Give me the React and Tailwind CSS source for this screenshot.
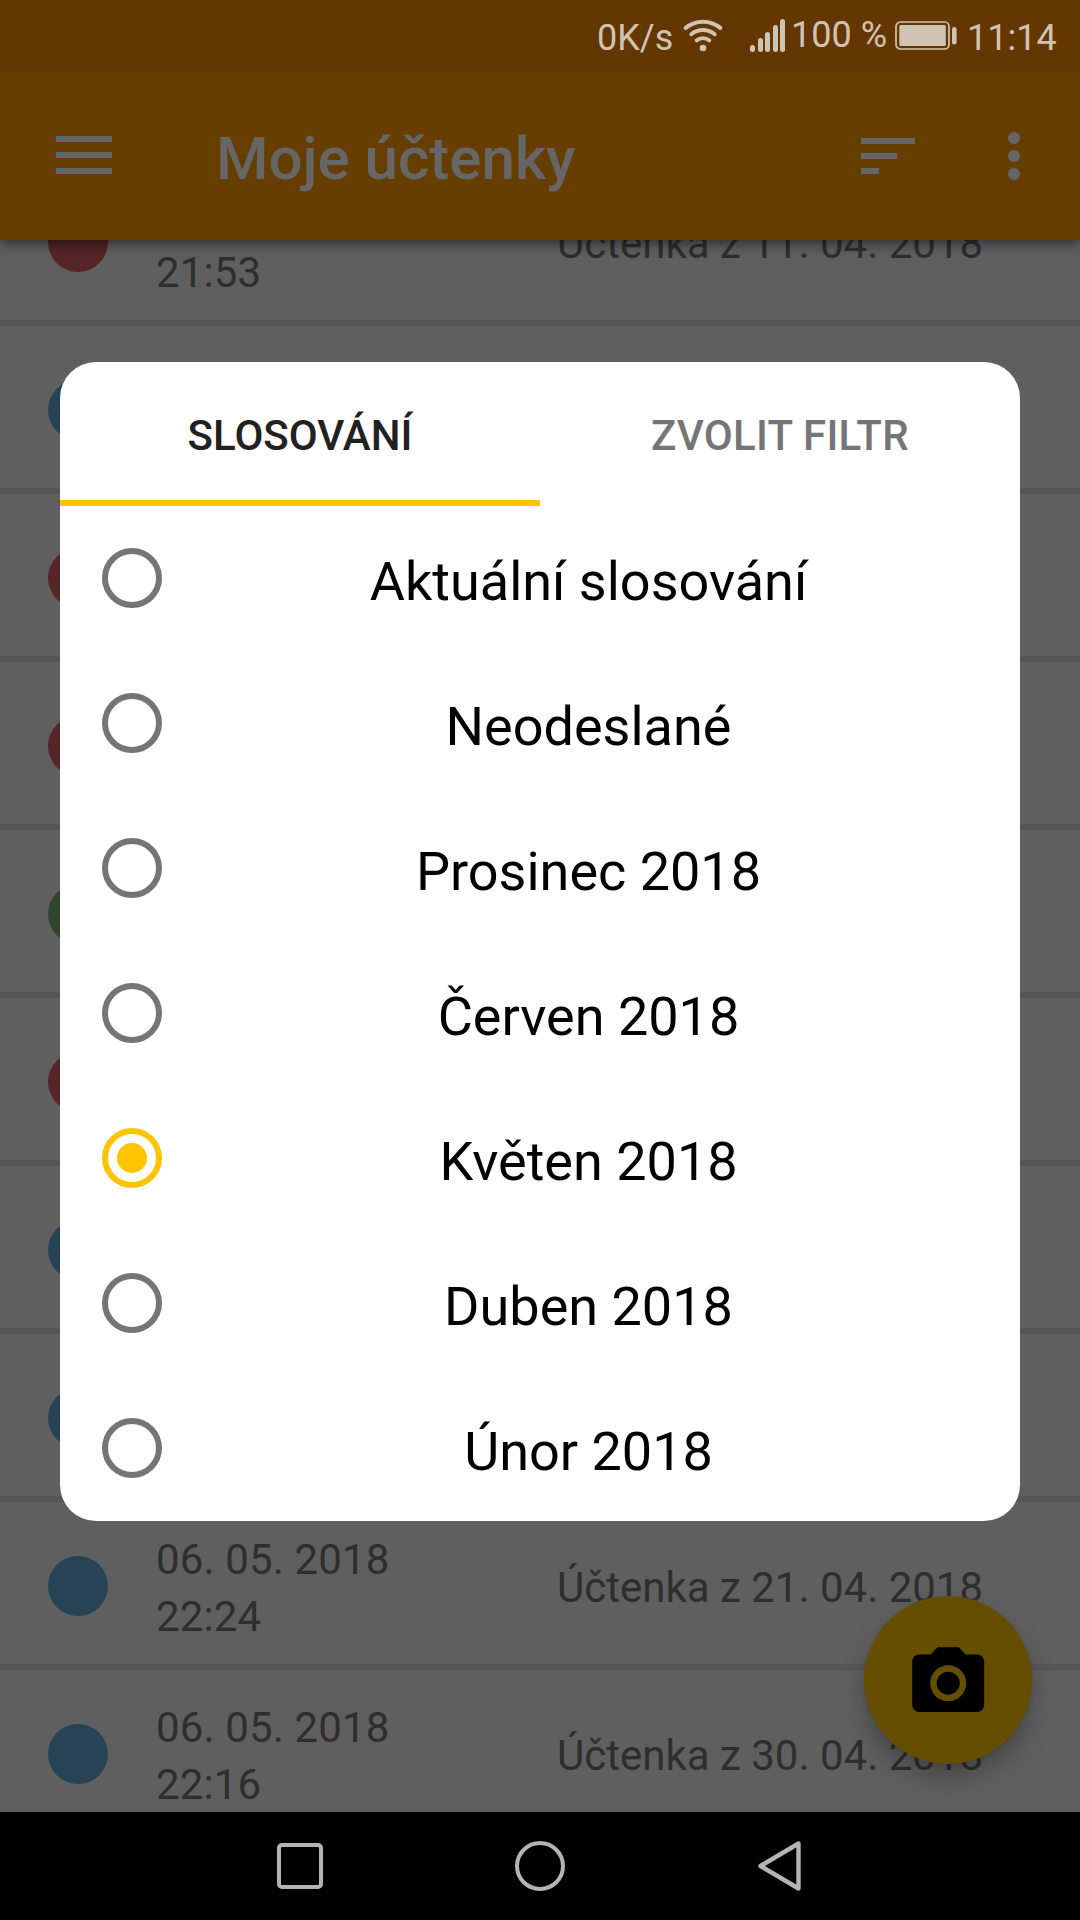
const ROWS = [
  { color: "bg-[#562527]", time: "21:53", title: "Účtenka z 11. 04. 2018" },
  { color: "bg-[#264455]" },
  { color: "bg-[#562527]" },
  { color: "bg-[#562527]" },
  { color: "bg-[#304630]" },
  { color: "bg-[#562527]" },
  { color: "bg-[#264455]" },
  { color: "bg-[#264455]" },
  { color: "bg-[#264455]", date: "06. 05. 2018", time: "22:24", title: "Účtenka z 21. 04. 2018" },
  { color: "bg-[#264455]", date: "06. 05. 2018", time: "22:16", title: "Účtenka z 30. 04. 2018" },
];

const OPTIONS = [
  "Aktuální slosování",
  "Neodeslané",
  "Prosinec 2018",
  "Červen 2018",
  "Květen 2018",
  "Duben 2018",
  "Únor 2018",
];

function StatusBar() {
  return (
    <div className="relative z-20 flex h-[72px] shrink-0 items-start bg-[#643600] pl-[597px] text-[36px] leading-[42px] text-[#d1c3b2]">
      <span className="mt-[17px] w-[86px] whitespace-nowrap">0K/s</span>
      <svg className="mt-[18px] h-9 w-10 shrink-0" viewBox="0 0 40 36" fill="none" stroke="#d1c3b2" strokeWidth="4" strokeLinecap="round">
        <path d="M2.7 9.9A27 27 0 0 1 37.3 9.9" />
        <path d="M8.3 16.2A18.5 18.5 0 0 1 31.7 16.2" />
        <path d="M13.7 22.3A10.4 10.4 0 0 1 26.3 22.3" />
        <circle cx="20" cy="30" r="3.3" fill="#d1c3b2" stroke="none" />
      </svg>
      <div className="mt-[19px] ml-[27px] flex h-[33px] w-[35px] shrink-0 items-end justify-between">
        <i className="h-[7px] w-[5px] rounded-full bg-[#d1c3b2]" />
        <i className="h-[14px] w-[5px] rounded-full bg-[#d1c3b2]" />
        <i className="h-[20px] w-[5px] rounded-full bg-[#d1c3b2]" />
        <i className="h-[27px] w-[5px] rounded-full bg-[#d1c3b2]" />
        <i className="h-[33px] w-[5px] rounded-full bg-[#d1c3b2]" />
      </div>
      <span className="mt-[14px] ml-[6px] w-[104px] whitespace-nowrap">100 %</span>
      <svg className="mt-5 h-8 w-[62px] shrink-0" viewBox="0 0 62 32">
        <rect x="1" y="2" width="53" height="27" rx="4.5" fill="none" stroke="#d1c3b2" strokeWidth="1.7" />
        <rect x="4.3" y="5" width="46.5" height="21" rx="1.5" fill="#d1c3b2" />
        <rect x="57" y="7" width="4.6" height="17.5" rx="2.2" fill="#d1c3b2" />
      </svg>
      <span className="mt-[17px] ml-[10px]">11:14</span>
    </div>
  );
}

function Toolbar() {
  return (
    <header className="relative z-10 flex h-[168px] shrink-0 items-start bg-[#663f00] shadow-[0_4px_12px_rgba(0,0,0,0.5)]">
      <div className="mt-16 ml-14 flex w-14 flex-col gap-2.5">
        <i className="h-1.5 bg-[#666666]" />
        <i className="h-1.5 bg-[#666666]" />
        <i className="h-1.5 bg-[#666666]" />
      </div>
      <h1 className="mt-[52px] ml-[104px] w-[644px] text-[60px] leading-[70px] font-medium text-[#666666]">Moje účtenky</h1>
      <div className="mt-[66px] ml-px flex w-[54px] flex-col gap-[9px]">
        <i className="h-1.5 w-[54px] bg-[#666666]" />
        <i className="h-1.5 w-9 bg-[#666666]" />
        <i className="h-1.5 w-[18px] bg-[#666666]" />
      </div>
      <div className="mt-[60px] ml-[93px] flex flex-col gap-1.5">
        <i className="size-3 rounded-full bg-[#666666]" />
        <i className="size-3 rounded-full bg-[#666666]" />
        <i className="size-3 rounded-full bg-[#666666]" />
      </div>
    </header>
  );
}

function Row({ row }) {
  return (
    <li className="flex h-[168px] items-start border-b-[6px] border-[#555555] text-[42px] leading-[57px] text-[#2e2e2e]">
      <span className={`mt-[54px] ml-12 size-[60px] shrink-0 rounded-full ${row.color}`} />
      <div className="mt-[29px] ml-12 w-[401px] shrink-0 tracking-[0.15px]">
        <div className="h-[57px]">{row.date}</div>
        <div className="h-[57px]">{row.time}</div>
      </div>
      <div className="mt-[57px] whitespace-nowrap">{row.title}</div>
    </li>
  );
}

function Dialog() {
  return (
    <section className="absolute top-[362px] left-[60px] flex h-[1159px] w-[960px] flex-col overflow-hidden rounded-[36px] bg-white">
      <div className="flex h-36 shrink-0 text-center text-[42px] leading-[50px] font-medium">
        <div className="flex-1 border-b-[6px] border-[#ffc400] pt-[49px] text-[#212121]">SLOSOVÁNÍ</div>
        <div className="flex-1 pt-[49px] tracking-[0.25px] text-[#757575]">ZVOLIT FILTR</div>
      </div>
      {OPTIONS.map((label, i) => (
        <label key={label} className="flex h-[145px] items-start">
          {i === 4 ? (
            <span className="mt-[42px] ml-[42px] flex size-[60px] items-center justify-center rounded-full border-[6px] border-[#ffc400]">
              <span className="size-[30px] rounded-full bg-[#ffc400]" />
            </span>
          ) : (
            <span className="mt-[42px] ml-[42px] size-[60px] rounded-full border-[6px] border-[#757575]" />
          )}
          <span className="mt-[44px] -ml-[5px] flex-1 text-center text-[54px] leading-[64px] text-black">{label}</span>
        </label>
      ))}
    </section>
  );
}

function CameraButton() {
  return (
    <button className="absolute top-[1596px] left-[864px] flex size-[168px] items-center justify-center rounded-full bg-[#664e00] shadow-[0_14px_24px_rgba(0,0,0,0.24),0_2px_4px_rgba(0,0,0,0.08)]">
      <svg className="mt-[7px] size-[86.4px]" viewBox="0 0 24 24" fill="#000">
        <circle cx="12" cy="12" r="3.2" />
        <path d="M9 2L7.17 4H4c-1.1 0-2 .9-2 2v12c0 1.1.9 2 2 2h16c1.1 0 2-.9 2-2V6c0-1.1-.9-2-2-2h-3.17L15 2H9zm3 15c-2.76 0-5-2.24-5-5s2.24-5 5-5 5 2.24 5 5-2.24 5-5 5z" />
      </svg>
    </button>
  );
}

function NavBar() {
  return (
    <nav className="relative flex h-[108px] shrink-0 items-center justify-between bg-black pr-[278px] pl-[277px]">
      <span className="size-[46px] rounded-[5px] border-[4.5px] border-[#b4b4b4]" />
      <span className="ml-[-1px] size-[50px] rounded-full border-[4.5px] border-[#b4b4b4]" />
      <svg className="h-[50px] w-11" viewBox="0 0 44 50" fill="none" stroke="#b4b4b4" strokeWidth="4.4" strokeLinejoin="round">
        <path d="M2.5 25L40.5 2.5V47.5Z" />
      </svg>
    </nav>
  );
}

export default function App() {
  return (
    <div className="relative flex h-[1920px] w-[1080px] flex-col overflow-hidden bg-[#5f5f5f] font-['Roboto',sans-serif]">
      <StatusBar />
      <Toolbar />
      <ul className="h-[1572px] shrink-0 overflow-hidden">
        <div className="-mt-[82px]">
          {ROWS.map((row, i) => (
            <Row key={i} row={row} />
          ))}
        </div>
      </ul>
      <CameraButton />
      <NavBar />
      <Dialog />
    </div>
  );
}
